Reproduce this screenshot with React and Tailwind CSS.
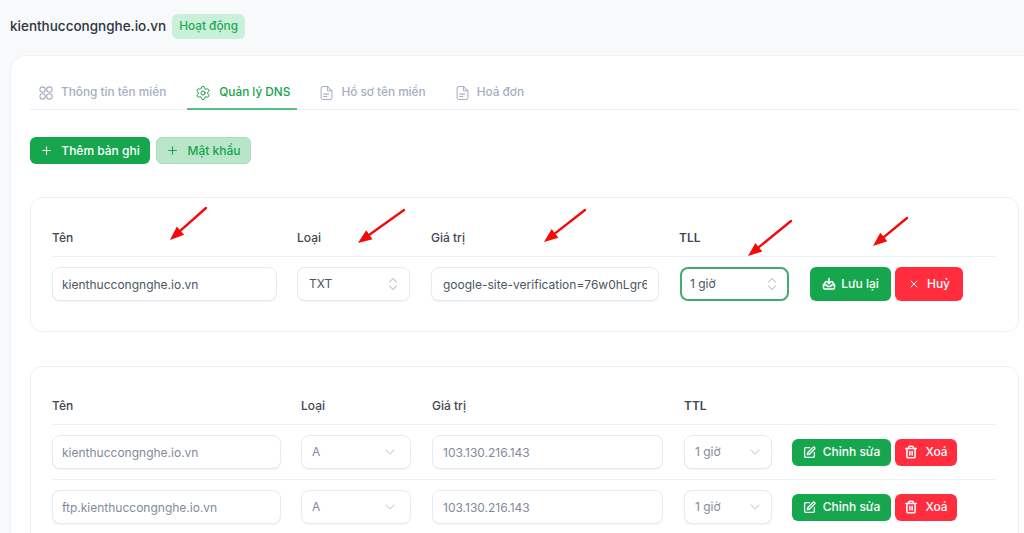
import React from "react";
import { Plus, X, Settings, SquarePen, Trash2 } from "lucide-react";

const font = { fontFamily: "Inter, 'Noto Sans', sans-serif" };

function Grid4({ className }) {
  return (
    <svg className={className} viewBox="0 0 14 14" fill="none" stroke="currentColor" strokeWidth="1.1">
      <circle cx="3.6" cy="3.6" r="2.7" />
      <circle cx="10.4" cy="3.6" r="2.7" />
      <circle cx="3.6" cy="10.4" r="2.7" />
      <circle cx="10.4" cy="10.4" r="2.7" />
    </svg>
  );
}

function Doc({ className }) {
  return (
    <svg className={className} viewBox="0 0 14 16" fill="none" stroke="currentColor" strokeWidth="1.1" strokeLinecap="round" strokeLinejoin="round">
      <path d="M8.2 1H3a1.8 1.8 0 0 0-1.8 1.8v10.4A1.8 1.8 0 0 0 3 15h8a1.8 1.8 0 0 0 1.8-1.8V5.6z" />
      <path d="M8.2 1v4.6h4.6" />
      <path d="M4 9.2h5.4M4 11.8h3.4" />
    </svg>
  );
}

function SaveIcon({ className }) {
  return (
    <svg className={className} viewBox="0 0 14 14" fill="none" stroke="currentColor" strokeWidth="1.6" strokeLinecap="round" strokeLinejoin="round">
      <path d="M4 4.5 1.5 8v2.5A1.5 1.5 0 0 0 3 12h8a1.5 1.5 0 0 0 1.5-1.5V8L10 4.5" />
      <path d="M1.5 8h3l1 1.5h3l1-1.5h3" />
      <path d="M7 1.5v5M5.2 4.8 7 6.6l1.8-1.8" />
    </svg>
  );
}

function UpDown() {
  return (
    <svg className="w-[10px] h-[14px] text-[#c9ced8]" viewBox="0 0 10 14" fill="none" stroke="currentColor" strokeWidth="1.1" strokeLinecap="round" strokeLinejoin="round">
      <path d="M1.5 5 5 1.5 8.5 5" />
      <path d="M1.5 9 5 12.5 8.5 9" />
    </svg>
  );
}

function Down() {
  return (
    <svg className="w-[10px] h-[6px] text-[#d3d8e0]" viewBox="0 0 10 6" fill="none" stroke="currentColor" strokeWidth="1.1" strokeLinecap="round" strokeLinejoin="round">
      <path d="M1 1l4 4 4-4" />
    </svg>
  );
}

function Tab({ icon, label, active, className }) {
  return (
    <div
      className={
        "h-[36px] flex items-center gap-[8px] pl-[8px] pr-[7px] pt-[4px] text-[11.8px] font-medium -mb-px border-b-2 " +
        (active ? "border-[#55c07f] text-[#16a34a] " : "border-transparent text-[#a5aec2] ") +
        (className || "")
      }
    >
      {icon}
      <span>{label}</span>
    </div>
  );
}

function TextField({ value, muted, className }) {
  return (
    <input
      readOnly
      value={value}
      style={font}
      className={
        "h-[34px] rounded-lg border border-[#e6eaf1] bg-white text-[12px] outline-none shadow-[0_1px_1px_rgba(230,234,241,0.6)] " +
        (muted ? "text-[#7f8a9c] " : "text-[#4b5563] ") +
        className
      }
    />
  );
}

function SelectBox({ value, muted, focused, className }) {
  return (
    <div
      className={
        "h-[34px] rounded-lg bg-white flex items-center justify-between text-[12px] " +
        (focused
          ? "border-2 border-[#45ac70] "
          : "border border-[#e6eaf1] shadow-[0_1px_1px_rgba(230,234,241,0.6)] ") +
        (muted ? "text-[#7f8a9c] " : "text-[#4b5563] ") +
        className
      }
    >
      <span>{value}</span>
      {muted ? <Down /> : <UpDown />}
    </div>
  );
}

function Btn({ color, icon, label, className }) {
  const c =
    color === "green"
      ? "bg-[#16a74e] text-white"
      : color === "red"
      ? "bg-[#ff2d3d] text-white"
      : "bg-[#b9e6c9] text-[#16a34a] border border-[#a6dcba]";
  return (
    <button className={"rounded-md flex items-center justify-center text-[12px] font-medium " + c + " " + className} style={font}>
      {icon}
      <span>{label}</span>
    </button>
  );
}

function Head({ children, className }) {
  return <div className={"text-[12px] font-medium text-[#3f4654] " + (className || "")}>{children}</div>;
}

function Row({ name, value }) {
  return (
    <div className="h-[55px] border-t border-[#eef1f5] flex items-center">
      <TextField muted value={name} className="w-[229px] px-[9px]" />
      <SelectBox muted value="A" className="w-[110px] ml-5 pl-[10px] pr-[15px]" />
      <TextField muted value={value} className="w-[231px] ml-[21px] px-[10px]" />
      <SelectBox muted value="1 giờ" className="w-[88px] ml-[21px] pl-[10px] pr-[11px]" />
      <Btn color="green" icon={<SquarePen size={13} strokeWidth={2.4} className="mr-[7px]" />} label="Chỉnh sửa" className="w-[99px] h-[27px] ml-5" />
      <Btn color="red" icon={<Trash2 size={14} strokeWidth={2.6} className="mr-[7px]" />} label="Xoá" className="w-[62px] h-[27px] ml-[4px]" />
    </div>
  );
}

export default function App() {
  return (
    <div className="relative w-[1024px] h-[533px] overflow-hidden bg-[#f8f9fb]" style={font}>
      <div className="h-[55px] flex items-start pl-[10px] pt-[14px]">
        <span className="text-[13.5px] leading-[25px] font-medium text-[#2d3442]">kienthuccongnghe.io.vn</span>
        <span className="ml-[6px] h-[25px] px-[7px] rounded-md bg-[#c9f0d8] text-[#1fa85a] text-[11.8px] font-medium flex items-center">Hoạt động</span>
      </div>

      <div className="ml-[10px] w-[1040px] rounded-tl-2xl bg-white border border-[#eef1f5] pl-[19px] pt-[18px] h-[600px]">
        <div className="w-[989px] h-[36px] flex border-b border-[#eceff4]">
          <Tab icon={<Grid4 className="w-[14px] h-[14px]" />} label="Thông tin tên miền" className="ml-px" />
          <Tab active icon={<Settings size={16} strokeWidth={1.5} />} label="Quản lý DNS" className="ml-[14px] pl-[8px] gap-[7px]" />
          <Tab icon={<Doc className="w-[13px] h-[16px]" />} label="Hồ sơ tên miền" className="ml-[14px] pl-[9px]" />
          <Tab icon={<Doc className="w-[13px] h-[16px]" />} label="Hoá đơn" className="ml-[14px] pl-[9px]" />
        </div>

        <div className="flex gap-[6px] mt-[27px]">
          <Btn color="green" icon={<Plus size={13} strokeWidth={2} className="mr-[8px]" />} label="Thêm bản ghi" className="w-[120px] h-[27px]" />
          <Btn color="light" icon={<Plus size={13} strokeWidth={2} className="mr-[8px]" />} label="Mật khẩu" className="w-[95px] h-[27px]" />
        </div>

        <div className="w-[989px] h-[135px] mt-[33px] rounded-xl border border-[#eceff4] px-[21px]">
          <div className="h-[58px] flex items-end pb-[9px]">
            <Head className="w-[245px]">Tên</Head>
            <Head className="w-[134px]">Loại</Head>
            <Head className="w-[248px]">Giá trị</Head>
            <Head className="font-semibold">TLL</Head>
          </div>
          <div className="border-t border-[#eef1f5] pt-[10px] flex items-center">
            <TextField value="kienthuccongnghe.io.vn" className="w-[225px] px-[9px]" />
            <SelectBox value="TXT" className="w-[113px] ml-5 pl-[11px] pr-[11px]" />
            <TextField value="google-site-verification=76w0hLgr6I9kQpZxT3mYvN" className="w-[228px] ml-[21px] px-[11px]" />
            <SelectBox focused value="1 giờ" className="w-[109px] ml-[21px] pl-[8px] pr-[10px]" />
            <Btn color="green" icon={<SaveIcon className="w-[14px] h-[14px] mr-[5px]" />} label="Lưu lại" className="w-[81px] h-[34px] ml-[21px]" />
            <Btn color="red" icon={<X size={12} strokeWidth={2} className="mr-[7px]" />} label="Huỷ" className="w-[68px] h-[34px] ml-[4px]" />
          </div>
        </div>

        <div className="w-[989px] h-[300px] mt-[34px] rounded-xl border border-[#eceff4] px-[21px]">
          <div className="h-[57px] flex items-end pb-[9px]">
            <Head className="w-[249px]">Tên</Head>
            <Head className="w-[131px]">Loại</Head>
            <Head className="w-[252px]">Giá trị</Head>
            <Head className="font-semibold">TTL</Head>
          </div>
          <Row name="kienthuccongnghe.io.vn" value="103.130.216.143" />
          <Row name="ftp.kienthuccongnghe.io.vn" value="103.130.216.143" />
        </div>
      </div>

      <svg className="absolute inset-0 w-[1024px] h-[533px] pointer-events-none" viewBox="0 0 1024 533">
        {[
          [206, 208, 170, 240],
          [404, 210, 358, 243],
          [585, 210, 544, 242],
          [791, 221, 748, 256],
          [907, 218, 873, 246],
        ].map(([x1, y1, x2, y2], i) => {
          const a = Math.atan2(y2 - y1, x2 - x1);
          const len = 14;
          const w = 5.5;
          const bx = x2 - Math.cos(a) * len;
          const by = y2 - Math.sin(a) * len;
          const nx = -Math.sin(a) * w;
          const ny = Math.cos(a) * w;
          return (
            <g key={i}>
              <line x1={x1} y1={y1} x2={bx} y2={by} stroke="#f50a0a" strokeWidth="2.4" strokeLinecap="round" />
              <polygon points={`${x2},${y2} ${bx + nx},${by + ny} ${bx - nx},${by - ny}`} fill="#f50a0a" />
            </g>
          );
        })}
      </svg>
    </div>
  );
}
